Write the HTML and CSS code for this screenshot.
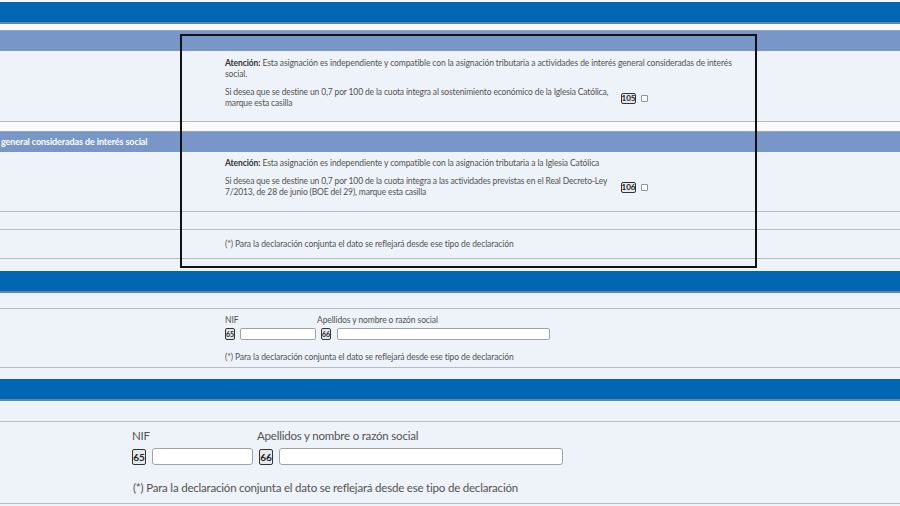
FILE: index.html
```html
<!DOCTYPE html>
<html lang="es">
<head>
<meta charset="utf-8">
<title>Asignación tributaria</title>
<link rel="stylesheet" href="styles.css">
</head>
<body>
<div class="page">
  <div class="topgap"></div>
  <div class="band"></div>
  <div class="spacer"></div>

  <div class="hdr"></div>
  <div class="row r1">
    <div class="lbl"></div>
    <div class="cell">
      <p class="note"><b>Atención:</b> Esta asignación es independiente y compatible con la asignación tributaria a actividades de interés general consideradas de interés<br>social.</p>
      <div class="opt">
        <p>Si desea que se destine un 0,7 por 100 de la cuota íntegra al sostenimiento económico de la Iglesia Católica,<br>marque esta casilla</p>
        <span class="code">105</span>
        <span class="chk"></span>
      </div>
    </div>
  </div>
  <div class="spacer s2"></div>

  <div class="hdr hdr-t">general consideradas de interés social</div>
  <div class="row r2">
    <div class="lbl"></div>
    <div class="cell">
      <p class="note"><b>Atención:</b> Esta asignación es independiente y compatible con la asignación tributaria a la Iglesia Católica</p>
      <div class="opt">
        <p>Si desea que se destine un 0,7 por 100 de la cuota íntegra a las actividades previstas en el Real Decreto-Ley<br>7/2013, de 28 de junio (BOE del 29), marque esta casilla</p>
        <span class="code">106</span>
        <span class="chk"></span>
      </div>
    </div>
  </div>
  <div class="row empty"></div>
  <div class="row foot">
    <div class="lbl"></div>
    <div class="cell"><p>(*) Para la declaración conjunta el dato se reflejará desde ese tipo de declaración</p></div>
  </div>
  <div class="spacer s3"></div>

  <div class="band"></div>
  <div class="row sub"></div>
  <div class="row form">
    <div class="flds">
      <span class="flab">NIF</span>
      <span class="flab flab2">Apellidos y nombre o razón social</span>
      <span class="code">65</span>
      <span class="inp"></span>
      <span class="code">66</span>
      <span class="inp"></span>
    </div>
    <p class="fnote">(*) Para la declaración conjunta el dato se reflejará desde ese tipo de declaración</p>
  </div>
  <div class="spacer s4"></div>

  <div class="band"></div>
  <div class="row sub lgsub"></div>
  <div class="row form lg">
    <div class="flds">
      <span class="flab">NIF</span>
      <span class="flab flab2">Apellidos y nombre o razón social</span>
      <span class="code">65</span>
      <span class="inp"></span>
      <span class="code">66</span>
      <span class="inp"></span>
    </div>
    <p class="fnote">(*) Para la declaración conjunta el dato se reflejará desde ese tipo de declaración</p>
  </div>

  <div class="highlight"></div>
</div>
</body>
</html>
```
FILE: styles.css
```css
* { box-sizing: border-box; }
html, body { margin: 0; padding: 0; }
body {
  background: #eef2f9;
  font-family: Lato, "Noto Sans", sans-serif;
  color: #525252;
  font-size: 8.5px;
  letter-spacing: -0.1px;
}
p { margin: 0; white-space: nowrap; }
.page {
  position: relative;
  width: 900px;
  height: 506px;
  overflow: hidden;
  background: #eef2f9;
}
.topgap { height: 2px; background: #f2f5fa; }
.band {
  height: 22px;
  background: #0267b3;
  border-bottom: 2px solid #5d86ad;
}
.spacer { height: 6px; background: #f9fafd; }
.s2 { height: 9px; }
.s3 { height: 12px; background: #eef2f9; }
.s4 { height: 11px; background: #eef2f9; }

.hdr {
  height: 21px;
  background: #7896c8;
  border-top: 1px solid #9aa5b6;
}
.hdr-t {
  color: #fff;
  font-weight: 700;
  line-height: 20px;
  padding-left: 1px;
  font-size: 9px;
  white-space: nowrap;
}

.row {
  display: grid;
  grid-template-columns: 225px 1fr;
  border-bottom: 1px solid #b6bcc6;
  line-height: 11px;
}
.r1 { padding: 7px 0 12px; }
.r2 { padding: 6px 0 13px; }
.note b { color: #333; font-weight: 700; }
.opt {
  display: grid;
  grid-template-columns: 391px auto auto;
  justify-content: start;
  align-items: center;
  column-gap: 5px;
  margin-top: 7px;
}
.opt p { letter-spacing: -0.15px; }
.code {
  display: inline-flex;
  align-items: center;
  justify-content: center;
  width: 15px;
  height: 11px;
  border: 1px solid #333;
  border-radius: 2px;
  background: #e5e8ec;
  color: #222;
  font-weight: 700;
  font-size: 8px;
  line-height: 1;
  letter-spacing: 0;
}
.chk {
  width: 7px;
  height: 7px;
  border: 1px solid #8d939b;
  border-radius: 1px;
  background: #fff;
}
.empty { height: 18px; display: block; }
.foot { height: 29px; align-items: center; }
.sub { height: 16px; display: block; }

.form {
  display: block;
  padding: 6px 0 5px 225px;
  height: 59px;
}
.flds {
  display: grid;
  grid-template-columns: 10px 76px 11px 213px;
  grid-template-rows: 10px 12px;
  column-gap: 5px;
  row-gap: 3px;
  align-items: center;
}
.flab { grid-column: 1 / 3; line-height: 10px; white-space: nowrap; }
.flab2 { grid-column: 3 / 5; margin-left: -4px; }
.form .code {
  width: 10px;
  height: 12px;
  font-size: 7px;
}
.inp {
  display: block;
  height: 12px;
  background: #fff;
  border: 1px solid #9ea4ac;
  border-radius: 2px;
}
.fnote { margin-top: 12px; line-height: 10px; }

.lgsub { height: 21px; }
.lg {
  padding: 7px 0 0 132px;
  height: 82px;
  font-size: 11.5px;
  letter-spacing: -0.2px;
}
.lg .flds {
  grid-template-columns: 14px 101px 14px 284px;
  grid-template-rows: 14px 17px;
  row-gap: 5px;
  column-gap: 6px;
}
.lg .flab { line-height: 14px; }
.lg .flab2 { margin-left: -2px; }
.lg .code {
  width: 14px;
  height: 16px;
  font-size: 10px;
}
.lg .inp { height: 17px; border-radius: 3px; }
.lg .fnote { margin-top: 16px; line-height: 14px; padding-left: 1px; }

.highlight {
  position: absolute;
  left: 180px;
  top: 34px;
  width: 577px;
  height: 234px;
  border: 2px solid #111;
  pointer-events: none;
}
```
